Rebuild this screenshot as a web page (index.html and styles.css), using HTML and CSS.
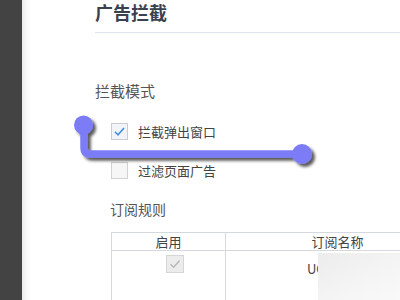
FILE: index.html
```html
<!DOCTYPE html>
<html lang="zh-CN">
<head>
  <meta charset="UTF-8">
  <title>广告拦截</title>
  <link rel="stylesheet" href="styles.css">
</head>
<body>
  <div class="sidebar"></div>

  <div class="main">
    <div class="header">
      <h1>广告拦截</h1>
    </div>

    <!-- 拦截模式 -->
    <div class="section-title">拦截模式</div>
    <div class="options">
      <div class="option">
        <span class="check checked">
          <svg width="13" height="13" viewBox="0 0 13 13"><path d="M2 6.8 L5 9.8 L11 3" fill="none" stroke="#3d8fe8" stroke-width="1.6"/></svg>
        </span>
        <span>拦截弹出窗口</span>
      </div>
      <div class="option second">
        <span class="check"></span>
        <span>过滤页面广告</span>
      </div>
    </div>

    <!-- 订阅规则 -->
    <div class="sub-title">订阅规则</div>
    <table class="rules">
      <colgroup>
        <col class="col-enable">
        <col class="col-name">
      </colgroup>
      <thead>
        <tr>
          <th>启用</th>
          <th>订阅名称</th>
        </tr>
      </thead>
      <tbody>
        <tr>
          <td class="enable">
            <span class="check disabled">
              <svg width="14" height="14" viewBox="0 0 14 14"><path d="M2.5 7.2 L5.6 10.2 L11.5 3.8" fill="none" stroke="#b9b9b9" stroke-width="1.5"/></svg>
            </span>
          </td>
          <td class="name">UC</td>
        </tr>
      </tbody>
    </table>
  </div>

  <div class="watermark"></div>

  <!-- 标注线 -->
  <svg class="marker" width="400" height="300" viewBox="0 0 400 300">
    <defs>
      <filter id="shadow" x="-10%" y="-10%" width="130%" height="140%">
        <feDropShadow dx="3" dy="3" stdDeviation="1.6" flood-color="#000" flood-opacity="0.65"/>
      </filter>
    </defs>
    <g filter="url(#shadow)" fill="#7b7bf6" stroke="#7b7bf6">
      <path d="M84 125 V148 Q84 154 90 154 H302" fill="none" stroke-width="7.5"/>
      <circle cx="83.5" cy="125" r="9.5" stroke="none"/>
      <circle cx="302" cy="154" r="10" stroke="none"/>
    </g>
  </svg>
</body>
</html>
```

FILE: styles.css
```css
body {
  margin: 0;
  width: 400px;
  height: 300px;
  overflow: hidden;
  display: flex;
  position: relative;
  font-family: "Noto Sans CJK SC", "Noto Sans", sans-serif;
  background-color: white;
}

.sidebar {
  width: 22px;
  flex-shrink: 0;
  background-color: #434343;
}

.main {
  flex: 1;
  min-width: 0;
  padding-left: 73px;
  background: linear-gradient(to right, #ececec, #fdfdfd 6px, white 10px);
  overflow: hidden;
}

.header {
  height: 32px;
  border-bottom: 1px solid #dde4ec;
}

h1 {
  margin: 0;
  padding-top: 1px;
  font-size: 18px;
  line-height: 22px;
  font-weight: bold;
  color: #3a4150;
}

.section-title {
  margin-top: 48px;
  font-size: 15px;
  line-height: 20px;
  color: #555;
}

.options {
  padding-left: 16px;
  margin-top: 20px;
}

.option {
  display: flex;
  align-items: center;
  gap: 10px;
  height: 20px;
  font-size: 13px;
  color: #444;
}

.option.second {
  margin-top: 19px;
}

.check {
  width: 15px;
  height: 15px;
  border: 1px solid #d2d2d2;
  background-color: #f6f6f6;
  display: inline-flex;
  align-items: center;
  justify-content: center;
}

.check.checked {
  background-color: #f2f4f7;
  border-color: #c9ccd2;
}

.check.disabled {
  width: 16px;
  height: 16px;
  background-color: #ececec;
  border-color: #d6d6d6;
}

.sub-title {
  margin-top: 19px;
  padding-left: 15px;
  font-size: 14px;
  line-height: 20px;
  color: #555;
}

.rules {
  margin-top: 13px;
  margin-left: 16px;
  width: 338px;
  table-layout: fixed;
  border-collapse: collapse;
  font-size: 13px;
  color: #444;
}

.col-enable {
  width: 114px;
}

.col-name {
  width: 224px;
}

.rules th {
  height: 17px;
  padding: 0;
  font-weight: normal;
  border: 1px solid #d6d8df;
  line-height: 17px;
}

.rules td {
  height: 60px;
  padding: 0;
  vertical-align: top;
  border-left: 1px solid #d6d8df;
  border-right: 1px solid #d6d8df;
}

.rules td.enable {
  padding-top: 4px;
  padding-left: 54px;
}

.rules td.name {
  padding-left: 81px;
  padding-top: 9px;
  line-height: 18px;
}

.watermark {
  position: absolute;
  left: 318px;
  top: 253px;
  width: 82px;
  height: 47px;
  background: linear-gradient(to bottom right, #ececec, #f5f5f5 60%, #f9f9f9);
}

.marker {
  position: absolute;
  left: 0;
  top: 0;
  pointer-events: none;
}
```
